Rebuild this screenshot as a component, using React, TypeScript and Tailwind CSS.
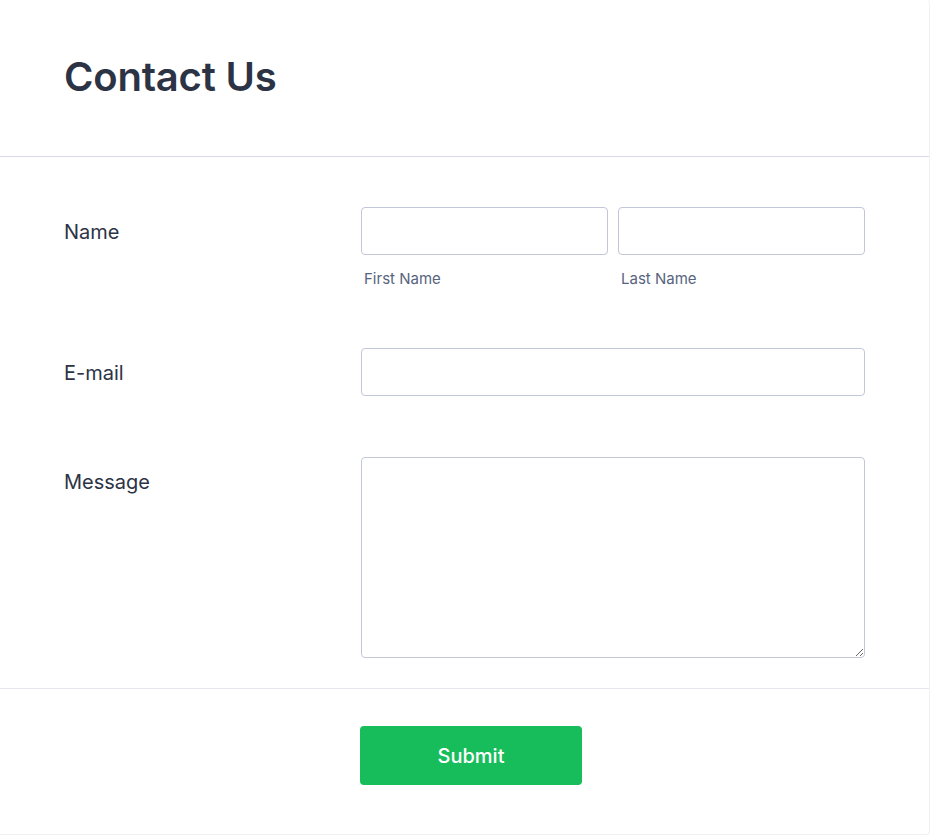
export default function App() {
  const font = { fontFamily: "Inter, 'Noto Sans', sans-serif" };
  return (
    <div className="w-[930px] h-[835px] bg-white" style={font}>
      <div className="w-full h-full bg-white border-r border-b border-[#f0f0f5] rounded-tr-[4px] rounded-br-[4px] flex flex-col">
        {/* Header */}
        <div className="h-[157px] px-16 flex items-center border-b border-[#d8dae9]">
          <h1 className="text-[40px] font-semibold text-[#2c3345] leading-none -mt-[3px] tracking-[-0.2px]">Contact Us</h1>
        </div>

        {/* Fields */}
        <div className="pl-16 pr-16 pt-[50px] pb-[30px] flex flex-col gap-[61px] border-b border-[#e6e7ef]">
          <div className="flex">
            <label className="w-[297px] pt-[12px] text-[20px] font-normal text-[#2c3345] leading-[26px]">Name</label>
            <div className="flex-1 grid grid-cols-2 gap-[10px]">
              <div>
                <input className="w-full h-[48px] border border-[#c3c6d8] rounded-[4px] bg-white outline-none" />
                <div className="mt-[15px] pl-[3px] text-[15px] text-[#57647e] leading-[17px]">First Name</div>
              </div>
              <div>
                <input className="w-full h-[48px] border border-[#c3c6d8] rounded-[4px] bg-white outline-none" />
                <div className="mt-[15px] pl-[3px] text-[15px] text-[#57647e] leading-[17px]">Last Name</div>
              </div>
            </div>
          </div>

          <div className="flex">
            <label className="w-[297px] pt-[12px] text-[20px] font-normal text-[#2c3345] leading-[26px]">E-mail</label>
            <input className="flex-1 h-[48px] border border-[#c3c6d8] rounded-[4px] bg-white outline-none" />
          </div>

          <div className="flex">
            <label className="w-[297px] pt-[12px] text-[20px] font-normal text-[#2c3345] leading-[26px]">Message</label>
            <textarea className="flex-1 h-[201px] border border-[#c3c6d8] rounded-[4px] bg-white outline-none resize-y" />
          </div>
        </div>

        {/* Footer */}
        <div className="flex justify-center pt-[37px] pl-[13px]">
          <button className="w-[222px] h-[59px] bg-[#18bd5b] rounded-[4px] text-white text-[20px] font-medium">
            Submit
          </button>
        </div>
      </div>
    </div>
  );
}
